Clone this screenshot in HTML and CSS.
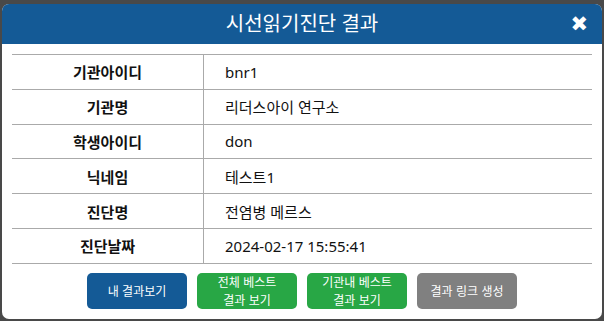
FILE: index.html
```html
<!DOCTYPE html>
<html lang="ko">
<head>
    <meta charset="UTF-8">
    <meta name="viewport" content="width=device-width, initial-scale=1.0">
    <title>시선읽기진단 결과</title>
    <link rel="stylesheet" href="styles.css">
</head>
<body>

<div class="overlay">
    <div class="modal">
        <div class="modal-header">
            <h2>시선읽기진단 결과</h2>
            <span class="close-button">&#10006;</span>
        </div>
        <div class="modal-body">
            <table class="result-table">
                <tr><th>기관아이디</th><td>bnr1</td></tr>
                <tr><th>기관명</th><td>리더스아이 연구소</td></tr>
                <tr><th>학생아이디</th><td>don</td></tr>
                <tr><th>닉네임</th><td>테스트1</td></tr>
                <tr><th>진단명</th><td>전염병 메르스</td></tr>
                <tr><th>진단날짜</th><td>2024-02-17 15:55:41</td></tr>
            </table>
            <div class="button-row">
                <button class="btn btn-blue">내 결과보기</button>
                <button class="btn btn-green">전체 베스트<br>결과 보기</button>
                <button class="btn btn-green">기관내 베스트<br>결과 보기</button>
                <button class="btn btn-gray">결과 링크 생성</button>
            </div>
        </div>
    </div>
</div>

</body>
</html>
```

FILE: styles.css
```css
body {
    font-family: "Noto Sans", "Noto Sans CJK KR", sans-serif;
    margin: 0;
    padding: 0;
    background-color: #494949;
}
.overlay {
    width: 604px;
    height: 321px;
    padding: 4px 2px 0 2px;
    box-sizing: border-box;
}
.modal {
    width: 600px;
    height: 315px;
    background-color: #fff;
    border-radius: 7px;
    overflow: hidden;
}
.modal-header {
    position: relative;
    height: 40px;
    background-color: #145a96;
    color: #fff;
    display: flex;
    align-items: center;
    justify-content: center;
}
.modal-header h2 {
    margin: 0;
    font-size: 20px;
    font-weight: normal;
    line-height: 40px;
}
.close-button {
    position: absolute;
    right: 14px;
    top: 8px;
    font-size: 21px;
    line-height: 24px;
    font-family: "DejaVu Sans", sans-serif;
    font-weight: bold;
}
.modal-body {
    padding: 10px;
}
.result-table {
    width: 580px;
    border-collapse: collapse;
    font-size: 15px;
    color: #111;
}
.result-table tr {
    height: 34.8px;
}
.result-table th, .result-table td {
    border-top: 1px solid #aaa;
    border-bottom: 1px solid #aaa;
    padding: 0;
}
.result-table th {
    width: 191px;
    border-right: 1px solid #aaa;
    text-align: center;
    font-weight: bold;
}
.result-table td {
    padding-left: 21px;
    text-align: left;
}
.button-row {
    display: flex;
    justify-content: center;
    gap: 10px;
    margin-top: 9px;
}
.btn {
    width: 100px;
    height: 36px;
    padding: 0;
    border: none;
    border-radius: 5px;
    color: #fff;
    font-family: "Noto Sans CJK KR", sans-serif;
    font-size: 12px;
    line-height: 18px;
    cursor: pointer;
}
.btn-blue {
    background-color: #145a96;
}
.btn-green {
    background-color: #28a745;
}
.btn-gray {
    background-color: #808080;
}
```
